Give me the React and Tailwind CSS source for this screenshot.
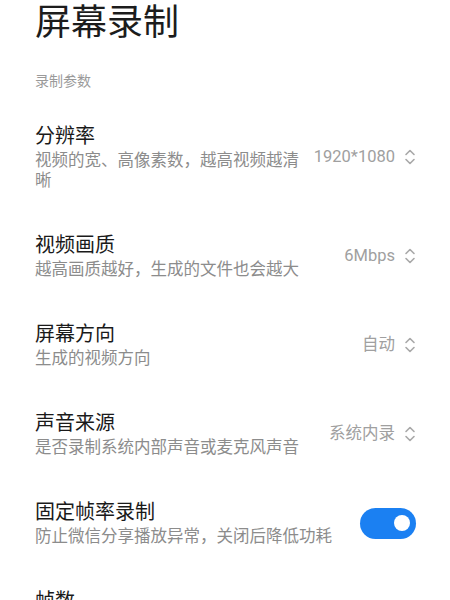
import React from "react";

const FONT = { fontFamily: 'Roboto, "Noto Sans CJK SC", "Noto Sans", sans-serif' };

function Chevrons() {
  return (
    <svg width="12" height="18" viewBox="0 0 12 18" fill="none" stroke="#a8a8a8" strokeWidth="1.6" strokeLinecap="round" strokeLinejoin="round">
      <path d="M2 6.5 L6 2.5 L10 6.5" />
      <path d="M2 11.5 L6 15.5 L10 11.5" />
    </svg>
  );
}

function Row({ title, sub, value, toggle }) {
  return (
    <div className="flex items-center pt-[21px] pb-[20px]">
      <div className="flex-1 min-w-0">
        <div className="text-[20px] leading-[26px] text-[#1a1a1a]">{title}</div>
        {sub && (
          <div className="mt-[2px] text-[16.5px] leading-[20px] text-[#8c8c8c]">
            {Array.isArray(sub)
              ? sub.map((s, i) => (
                  <div key={i} className="whitespace-nowrap">{s}</div>
                ))
              : sub}
          </div>
        )}
      </div>
      {toggle ? (
        <div className="shrink-0 ml-4 w-[56px] h-[31px] rounded-full bg-[#1b80f2] flex items-center justify-end pr-[6px]">
          <div className="w-[16px] h-[16px] rounded-full bg-white" />
        </div>
      ) : value ? (
        <div className="shrink-0 ml-4 flex items-center gap-[9px]">
          <span className="text-[16.5px] text-[#a0a0a0]">{value}</span>
          <Chevrons />
        </div>
      ) : null}
    </div>
  );
}

export default function App() {
  return (
    <div className="w-[450px] h-[600px] overflow-hidden bg-white pl-[35px] pr-[34px]" style={FONT}>
      <div className="text-[36px] leading-[46px] text-[#1c1c1c]">屏幕录制</div>
      <div className="mt-[25px] text-[14px] leading-[20px] text-[#9a9a9a]">录制参数</div>
      <div className="mt-[11px]">
        <Row title="分辨率" sub={["视频的宽、高像素数，越高视频越清", "晰"]} value="1920*1080" />
        <Row title="视频画质" sub="越高画质越好，生成的文件也会越大" value="6Mbps" />
        <Row title="屏幕方向" sub="生成的视频方向" value="自动" />
        <Row title="声音来源" sub="是否录制系统内部声音或麦克风声音" value="系统内录" />
        <Row title="固定帧率录制" sub="防止微信分享播放异常，关闭后降低功耗" toggle />
        <Row title="帧数" />
      </div>
    </div>
  );
}
